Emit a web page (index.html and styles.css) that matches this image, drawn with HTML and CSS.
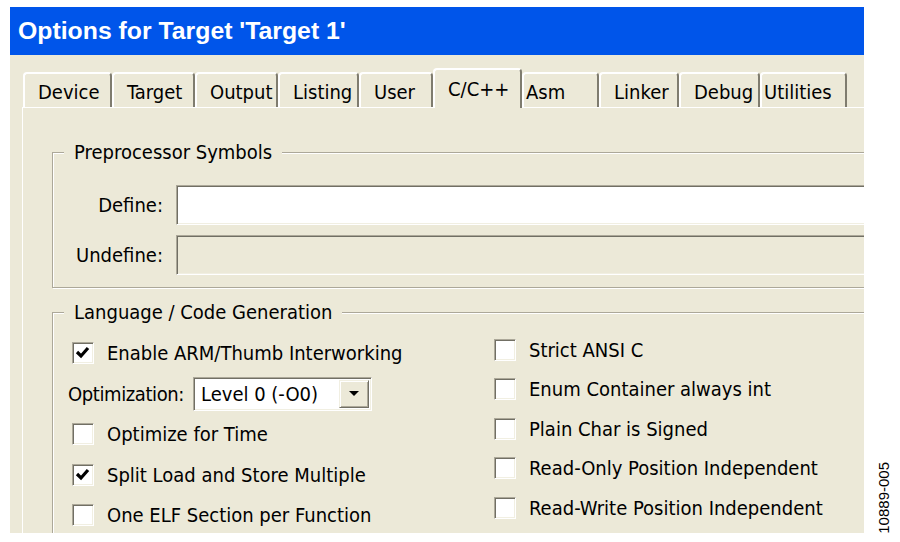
FILE: index.html
```html
<!DOCTYPE html>
<html lang="en">
<head>
  <meta charset="UTF-8">
  <meta name="viewport" content="width=device-width, initial-scale=1.0">
  <title>Options for Target 'Target 1'</title>
  <link rel="stylesheet" href="styles.css">
</head>
<body>
  <div class="figure">
    <div class="window">
      <div class="titlebar">Options for Target 'Target 1'</div>
      <div class="client">
        <div class="tabs">
          <div class="tab">Device</div>
          <div class="tab">Target</div>
          <div class="tab">Output</div>
          <div class="tab">Listing</div>
          <div class="tab">User</div>
          <div class="tab active">C/C++</div>
          <div class="tab tight">Asm</div>
          <div class="tab">Linker</div>
          <div class="tab">Debug</div>
          <div class="tab tight">Utilities</div>
        </div>

        <div class="panel">
          <fieldset class="group group-pre">
            <legend>Preprocessor Symbols</legend>
            <div class="fields">
              <label class="field-label">Define:</label>
              <div class="edit"></div>
              <label class="field-label">Undefine:</label>
              <div class="edit disabled"></div>
            </div>
          </fieldset>

          <fieldset class="group group-lang">
            <legend>Language / Code Generation</legend>
            <div class="options">
              <div class="col col-left">
                <div class="check on"><span class="box"><svg viewBox="0 0 20 20"><polyline points="4,9 8,13 15,5"/></svg></span>Enable ARM/Thumb Interworking</div>
                <div class="select-row">
                  <span class="select-label">Optimization:</span>
                  <div class="combo">
                    <span class="combo-text">Level 0 (-O0)</span>
                    <span class="combo-btn"><i class="arrow"></i></span>
                  </div>
                </div>
                <div class="check"><span class="box"></span>Optimize for Time</div>
                <div class="check on"><span class="box"><svg viewBox="0 0 20 20"><polyline points="4,9 8,13 15,5"/></svg></span>Split Load and Store Multiple</div>
                <div class="check"><span class="box"></span>One ELF Section per Function</div>
              </div>
              <div class="col col-right">
                <div class="check"><span class="box"></span>Strict ANSI C</div>
                <div class="check"><span class="box"></span>Enum Container always int</div>
                <div class="check"><span class="box"></span>Plain Char is Signed</div>
                <div class="check"><span class="box"></span>Read-Only Position Independent</div>
                <div class="check"><span class="box"></span>Read-Write Position Independent</div>
              </div>
            </div>
          </fieldset>
        </div>
      </div>
    </div>
    <div class="fig-id">10889-005</div>
  </div>
</body>
</html>
```

FILE: styles.css
```css
body {
  margin: 0;
  background: #fff;
  font-family: "DejaVu Sans Condensed", "DejaVu Sans", sans-serif;
  font-stretch: condensed;
  font-size: 20px;
  color: #000;
}
.figure {
  display: flex;
  align-items: flex-end;
  padding: 7px 0 0 10px;
}
.window {
  width: 854px;
  height: 526px;
  overflow: hidden;
  background: #ece9d8;
  flex-shrink: 0;
}
.titlebar {
  height: 48px;
  display: flex;
  align-items: center;
  padding-left: 8px;
  background: #0055ea;
  color: #fff;
  font-family: "Liberation Sans", Arial, sans-serif;
  font-stretch: normal;
  font-weight: bold;
  font-size: 24.8px;
}
.client {
  padding-top: 13px;
}

/* tab strip */
.tabs {
  display: grid;
  grid-template-columns: 89px 83px 83px 81px 74px 89px 77px 80px 81px 87px;
  align-items: end;
  padding-left: 13px;
}
.tab {
  height: 35px;
  box-sizing: border-box;
  border-top: 2px solid #fff;
  border-left: 2px solid #fff;
  border-right: 2px solid #7f7c6f;
  border-radius: 4px 4px 0 0;
  padding: 6px 0 0 13px;
  white-space: nowrap;
}
.tab.tight {
  padding-left: 2px;
}
.tab.active {
  position: relative;
  height: 40px;
  margin-bottom: -1px;
  padding-top: 7px;
  background: #ece9d8;
}
.panel {
  width: 900px;
  margin-left: 12px;
  border-top: 1px solid #fff;
  border-left: 1px solid #fff;
  padding: 32px 0 0 29px;
}

/* group boxes */
.group {
  margin: 0;
  padding: 0;
  min-width: 0;
  border: 1px solid #aca899;
  box-shadow: inset 1px 1px 0 #fff, 1px 1px 0 #fff;
}
.group legend {
  margin-left: 11px;
  padding: 0 10px;
  line-height: 24px;
  background: #ece9d8;
}
.group-pre {
  padding: 21px 0 12px;
}
.group-lang {
  margin-top: 12px;
  padding-top: 6px;
  height: 300px;
}

/* define / undefine */
.fields {
  display: grid;
  grid-template-columns: 110px 1fr;
  grid-auto-rows: 40px;
  column-gap: 13px;
  row-gap: 10px;
}
.field-label {
  align-self: center;
  text-align: right;
}
.edit {
  box-sizing: border-box;
  border: 1px solid;
  border-color: #aca899 #fff #fff #aca899;
  box-shadow: inset 1px 1px 0 #716f64, inset -1px -1px 0 #f1efe2;
  background: #fff;
}
.edit.disabled {
  background: #ece9d8;
}

/* check boxes */
.options {
  display: grid;
  grid-template-columns: 422px 1fr;
}
.col {
  padding-left: 15px;
}
.col-left {
  padding-top: 3px;
}
.col-left > * {
  height: 40.5px;
}
.col-right > * {
  height: 39.5px;
}
.check {
  display: flex;
  align-items: center;
  gap: 13px;
  margin-left: 4px;
  white-space: nowrap;
}
.box {
  width: 22px;
  height: 22px;
  box-sizing: border-box;
  border: 1px solid;
  border-color: #aca899 #fff #fff #aca899;
  box-shadow: inset 1px 1px 0 #716f64, inset -1px -1px 0 #f1efe2;
  background: #fff;
  flex-shrink: 0;
}
.box svg {
  display: block;
  width: 20px;
  height: 20px;
}
.box polyline {
  fill: none;
  stroke: #000;
  stroke-width: 3.2;
}

/* optimization combo */
.select-row {
  display: flex;
  align-items: center;
  gap: 11px;
}
.select-label {
  width: 114px;
  letter-spacing: -0.4px;
  white-space: nowrap;
}
.combo {
  width: 179px;
  height: 34px;
  box-sizing: border-box;
  display: flex;
  align-items: center;
  justify-content: space-between;
  padding: 2px;
  border: 1px solid;
  border-color: #aca899 #fff #fff #aca899;
  box-shadow: inset 1px 1px 0 #716f64, inset -1px -1px 0 #f1efe2;
  background: #fff;
}
.combo-text {
  padding-left: 5px;
}
.combo-btn {
  width: 30px;
  height: 28px;
  box-sizing: border-box;
  display: flex;
  align-items: center;
  justify-content: center;
  background: #ece9d8;
  border: 1px solid;
  border-color: #f1efe2 #716f64 #716f64 #f1efe2;
  box-shadow: inset 1px 1px 0 #fff, inset -1px -1px 0 #aca899;
}
.arrow {
  width: 0;
  height: 0;
  border-left: 5px solid transparent;
  border-right: 5px solid transparent;
  border-top: 5px solid #000;
}

/* figure number */
.fig-id {
  writing-mode: vertical-rl;
  transform: rotate(180deg);
  margin: 0 0 -1px 13px;
  font-family: "Liberation Sans", Arial, sans-serif;
  font-stretch: normal;
  font-size: 15px;
  line-height: 14px;
}
```
